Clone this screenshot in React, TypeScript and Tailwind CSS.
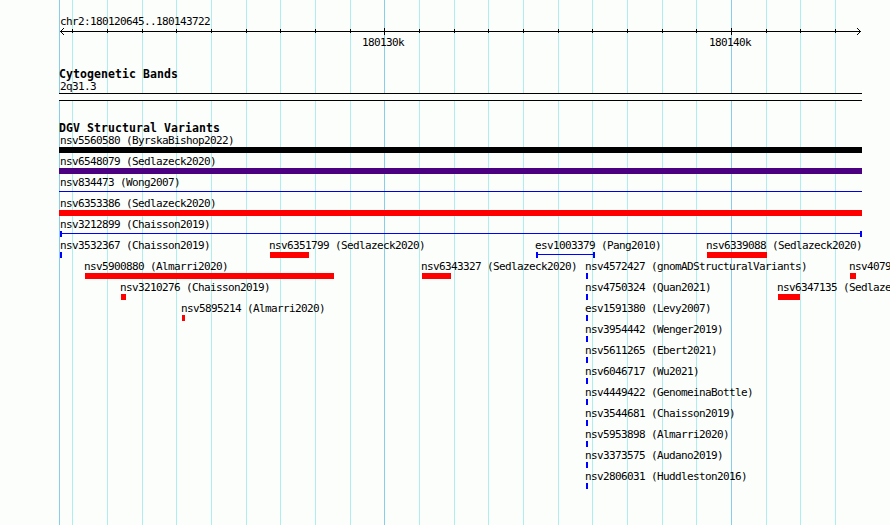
const TICKS = [72, 107, 142, 176, 211, 246, 280, 315, 350, 384, 419, 454, 488, 523, 558, 592, 627, 662, 696, 731, 766, 800, 835];
const MAJOR = [384, 731];

type Shape = 'bar' | 'span' | 'line';

interface Variant {
  name: string;
  x: number;
  width: number;
  color: string;
  shape?: Shape;
}

const BLUE = '#0000ff';
const RED = '#ff0000';

const ROWS: Variant[][] = [
  [{ name: 'nsv5560580 (ByrskaBishop2022)', x: 59, width: 803, color: '#000000' }],
  [{ name: 'nsv6548079 (Sedlazeck2020)', x: 59, width: 803, color: '#4b0082' }],
  [{ name: 'nsv834473 (Wong2007)', x: 59, width: 803, color: '#0000dd', shape: 'line' }],
  [{ name: 'nsv6353386 (Sedlazeck2020)', x: 59, width: 803, color: RED }],
  [{ name: 'nsv3212899 (Chaisson2019)', x: 60, width: 802, color: BLUE, shape: 'span' }],
  [
    { name: 'nsv3532367 (Chaisson2019)', x: 60, width: 2, color: BLUE },
    { name: 'nsv6351799 (Sedlazeck2020)', x: 270, width: 39, color: RED },
    { name: 'esv1003379 (Pang2010)', x: 536, width: 59, color: BLUE, shape: 'span' },
    { name: 'nsv6339088 (Sedlazeck2020)', x: 707, width: 60, color: RED },
  ],
  [
    { name: 'nsv5900880 (Almarri2020)', x: 85, width: 249, color: RED },
    { name: 'nsv6343327 (Sedlazeck2020)', x: 422, width: 29, color: RED },
    { name: 'nsv4572427 (gnomADStructuralVariants)', x: 586, width: 2, color: BLUE },
    { name: 'nsv4079', x: 850, width: 6, color: RED },
  ],
  [
    { name: 'nsv3210276 (Chaisson2019)', x: 121, width: 5, color: RED },
    { name: 'nsv4750324 (Quan2021)', x: 586, width: 2, color: BLUE },
    { name: 'nsv6347135 (Sedlaze', x: 778, width: 22, color: RED },
  ],
  [
    { name: 'nsv5895214 (Almarri2020)', x: 182, width: 3, color: RED },
    { name: 'esv1591380 (Levy2007)', x: 586, width: 2, color: BLUE },
  ],
  [{ name: 'nsv3954442 (Wenger2019)', x: 586, width: 2, color: BLUE }],
  [{ name: 'nsv5611265 (Ebert2021)', x: 586, width: 2, color: BLUE }],
  [{ name: 'nsv6046717 (Wu2021)', x: 586, width: 2, color: BLUE }],
  [{ name: 'nsv4449422 (GenomeinaBottle)', x: 586, width: 2, color: BLUE }],
  [{ name: 'nsv3544681 (Chaisson2019)', x: 586, width: 2, color: BLUE }],
  [{ name: 'nsv5953898 (Almarri2020)', x: 586, width: 2, color: BLUE }],
  [{ name: 'nsv3373575 (Audano2019)', x: 586, width: 2, color: BLUE }],
  [{ name: 'nsv2806031 (Huddleston2016)', x: 586, width: 2, color: BLUE }],
];

function Gridlines() {
  return (
    <svg className="absolute inset-0" width="890" height="525" shapeRendering="crispEdges">
      <rect x="59" y="0" width="1" height="525" fill="#87ceeb" />
      {TICKS.map((x) => (
        <rect key={x} x={x} y="0" width="1" height="525" fill={MAJOR.includes(x) ? '#87ceeb' : '#afeeee'} />
      ))}
    </svg>
  );
}

function Ruler() {
  return (
    <svg className="block" width="890" height="9" shapeRendering="crispEdges">
      <rect x="60" y="4" width="801" height="1" />
      {/* arrow heads, one pixel per step */}
      {[1, 2, 3].map((i) => (
        <g key={i}>
          <rect x={60 + i} y={4 - i} width="1" height="1" />
          <rect x={60 + i} y={4 + i} width="1" height="1" />
          <rect x={860 - i} y={4 - i} width="1" height="1" />
          <rect x={860 - i} y={4 + i} width="1" height="1" />
        </g>
      ))}
      {TICKS.map((x) =>
        MAJOR.includes(x) ? (
          <rect key={x} x={x} y="1" width="1" height="7" />
        ) : (
          <rect key={x} x={x} y="2" width="1" height="4" />
        )
      )}
    </svg>
  );
}

function Glyph({ width, color, shape = 'bar' }: Variant) {
  if (shape === 'line') {
    return (
      <div className="h-1.5 pt-0.5" style={{ width }}>
        <div className="h-px w-full" style={{ background: color }} />
      </div>
    );
  }
  if (shape === 'span') {
    return (
      <div className="flex h-1.5" style={{ width }}>
        <div className="w-0.5" style={{ background: color }} />
        <div className="mt-0.5 h-px flex-1" style={{ background: color }} />
        <div className="w-0.5" style={{ background: color }} />
      </div>
    );
  }
  return <div className="h-1.5" style={{ width, background: color }} />;
}

// labels of variants that start at the left edge are kept inside it
function labelClass(x: number) {
  if (x === 59) return 'ml-px h-[13px]';
  if (x === 60) return 'h-[13px]';
  return '-ml-px h-[13px]';
}

export default function App() {
  return (
    <div className="relative h-[525px] w-[890px] overflow-hidden bg-[#fcfefc] font-['DejaVu_Sans_Mono',monospace] text-[11px] leading-[14px] tracking-[-0.622px] whitespace-nowrap text-black">
      <Gridlines />
      <div className="relative flex flex-col">
        <div className="mt-[15px] h-3 pl-[60px]">chr2:180120645..180143722</div>
        <Ruler />
        <div className="grid h-3">
          <span className="col-start-1 row-start-1 ml-[362px]">180130k</span>
          <span className="col-start-1 row-start-1 ml-[709px]">180140k</span>
        </div>

        <h2 className="mt-5 h-3 pl-[59px] text-[11.5px] leading-3 font-bold tracking-[0.077px]">Cytogenetic Bands</h2>
        <div className="h-3 pl-[60px]">2q31.3</div>
        <div className="mt-px ml-[59px] h-2 w-[803px] border-y border-black bg-[#fcfefc]" />

        <h2 className="mt-[21px] h-3 pl-[59px] text-[11.5px] leading-3 font-bold tracking-[0.077px]">DGV Structural Variants</h2>
        {ROWS.map((row) => (
          <div key={row[0].name} className="grid h-[21px]">
            {row.map((variant) => (
              <div
                key={variant.name}
                className="col-start-1 row-start-1 flex flex-col"
                style={{ marginLeft: variant.x }}
              >
                <span className={labelClass(variant.x)}>{variant.name}</span>
                <Glyph {...variant} />
              </div>
            ))}
          </div>
        ))}
      </div>
    </div>
  );
}
